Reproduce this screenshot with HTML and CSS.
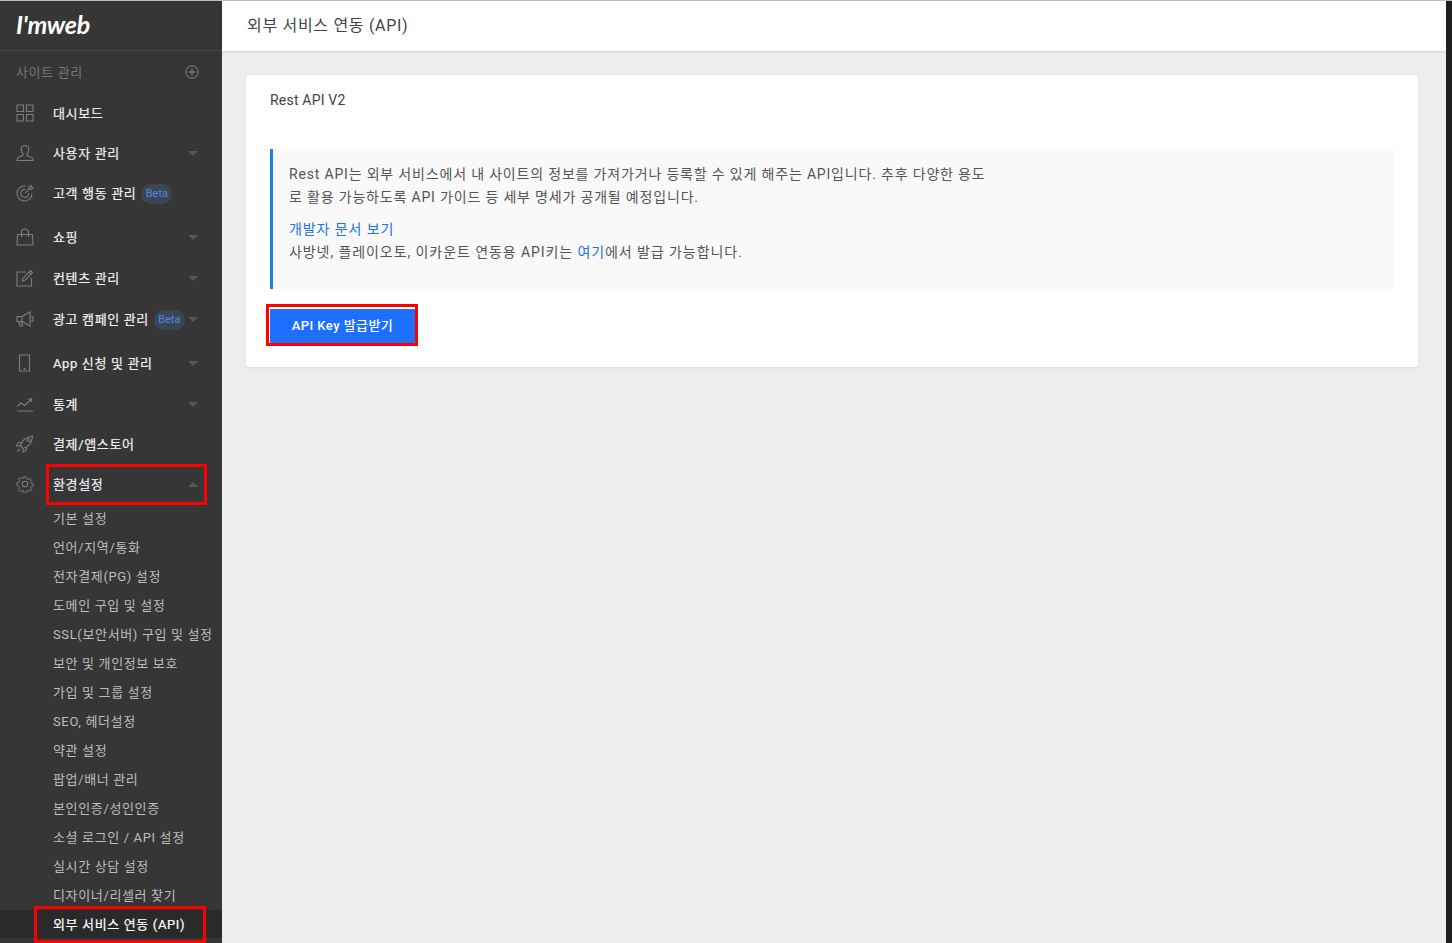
FILE: index.html
```html
<!DOCTYPE html>
<html lang="ko">
<head>
<meta charset="utf-8">
<title>외부 서비스 연동 (API)</title>
<link rel="stylesheet" href="styles.css">
</head>
<body>
<div class="app">
  <aside class="sidebar">
    <div class="logo-bar"><span class="logo">I'mweb</span></div>
    <div class="site-row">
      <span>사이트 관리</span>
      <svg class="plus" viewBox="0 0 14 14"><circle cx="7" cy="7" r="6.2"/><path d="M7 3.500v7M3.500 7h7"/></svg>
    </div>
    <nav class="menu">
      <a class="item">
        <svg class="ico" viewBox="0 0 18 18"><path d="M1 1h6.500v6.500H1zM10.500 1H17v6.500h-6.500zM1 10.500h6.500V17H1zM10.500 10.500H17V17h-6.500z"/></svg>
        <span class="label">대시보드</span>
      </a>
      <a class="item">
        <svg class="ico" viewBox="0 0 18 18"><path d="M9 1.500c-2.400 0-3.800 1.800-3.800 4 0 1.800.8 3.200 1.900 4.200.4.800.1 1.500-.6 1.800l-4 1.700C1.500 13.700 1 14.800 1 16.500h16c0-1.700-.5-2.800-1.500-3l-4-1.700c-.7-.3-1-1-.6-1.800 1.100-1 1.900-2.400 1.900-4.200 0-2.200-1.400-4-3.800-4z"/></svg>
        <span class="label">사용자 관리</span><i class="caret"></i>
      </a>
      <a class="item">
        <svg class="ico" viewBox="0 0 18 18"><path d="M9.500 2.100A7.500 7.500 0 1 0 16 9.500M9.500 5.500A4 4 0 1 0 12.700 9M9 9.200l5-5M13 2.500v2.700h2.800L17 3.500h-1.800V1.600z"/></svg>
        <span class="label">고객 행동 관리</span><span class="beta">Beta</span>
      </a>
      <a class="item gap4">
        <svg class="ico" viewBox="0 0 18 18"><path d="M1.500 6.500h15l.5 10.500H1zM5.500 9V4.500a3.500 3.500 0 0 1 7 0V9"/></svg>
        <span class="label">쇼핑</span><i class="caret"></i>
      </a>
      <a class="item gap1">
        <svg class="ico" viewBox="0 0 18 18"><path d="M15.500 9v8h-14.500V3h9M6.500 12l.7-3L14.500 1.500l2 2L9.300 11zM12.800 3.200l2 2"/></svg>
        <span class="label">컨텐츠 관리</span><i class="caret"></i>
      </a>
      <a class="item gap1">
        <svg class="ico" viewBox="0 0 18 18"><path d="M1 6.500h5v5H1zM6 6.500l8-4.500v14l-8-4.500M14 7h3v4h-3M3 11.500l1 4.500h2.500l-1-4.500"/></svg>
        <span class="label">광고 캠페인 관리</span><span class="beta">Beta</span><i class="caret"></i>
      </a>
      <a class="item gap4">
        <svg class="ico" viewBox="0 0 18 18"><path d="M3.500 1h10v16h-10z"/><path class="dot" d="M8.200 14.300h.8v.8h-.8z"/></svg>
        <span class="label">App 신청 및 관리</span><i class="caret"></i>
      </a>
      <a class="item gap1">
        <svg class="ico" viewBox="0 0 18 18"><path d="M1 16h16M1 11.500l4-3.500 3.500 2.500L15 4.500M12 4h3.500v3"/></svg>
        <span class="label">통계</span><i class="caret"></i>
      </a>
      <a class="item">
        <svg class="ico" viewBox="0 0 18 18"><path d="M6 12.500L4.500 11c1-4 4-9 12-10-.5 8-5.500 11.500-9.500 12.500zM5 7.500H2.500L.5 11l3.500-.2M10.500 12.500V15l-3.500 2 .2-3.500M1.500 16.500l2.500-2.500M11 5a1.500 1.500 0 1 0 3 0 1.500 1.500 0 1 0-3 0"/></svg>
        <span class="label">결제/앱스토어</span>
      </a>
      <a class="item">
        <svg class="ico" viewBox="0 0 18 18"><circle cx="9" cy="9" r="2.800"/><path d="M7.600 1h2.800l.4 2.300 1.500.7 2-1.300 2 2-1.300 2 .7 1.500 2.300.4v2.800l-2.300.4-.7 1.500 1.300 2-2 2-2-1.300-1.500.7-.4 2.300H7.600l-.4-2.300-1.500-.7-2 1.300-2-2 1.300-2-.7-1.500L0 10.400V7.600l2.300-.4.7-1.500-1.300-2 2-2 2 1.300 1.500-.7z" transform="translate(.9 .9) scale(.9)"/></svg>
        <span class="label">환경설정</span><i class="caret caret-up"></i>
      </a>
    </nav>
    <ul class="submenu">
      <li>기본 설정</li>
      <li>언어/지역/통화</li>
      <li>전자결제(PG) 설정</li>
      <li>도메인 구입 및 설정</li>
      <li>SSL(보안서버) 구입 및 설정</li>
      <li>보안 및 개인정보 보호</li>
      <li>가입 및 그룹 설정</li>
      <li>SEO, 헤더설정</li>
      <li>약관 설정</li>
      <li>팝업/배너 관리</li>
      <li>본인인증/성인인증</li>
      <li>소셜 로그인 / API 설정</li>
      <li>실시간 상담 설정</li>
      <li>디자이너/리셀러 찾기</li>
      <li class="active">외부 서비스 연동 (API)</li>
    </ul>
  </aside>
  <main class="main">
    <header class="topbar">외부 서비스 연동 (API)</header>
    <div class="content">
      <section class="card">
        <h2 class="card-title">Rest API V2</h2>
        <div class="notice">
          <p class="notice-main">Rest API는 외부 서비스에서 내 사이트의 정보를 가져가거나 등록할 수 있게 해주는 API입니다. 추후 다양한 용도<br>로 활용 가능하도록 API 가이드 등 세부 명세가 공개될 예정입니다.</p>
          <p class="notice-sub"><a class="link">개발자 문서 보기</a><br>사방넷, 플레이오토, 이카운트 연동용 API키는 <a class="link">여기</a>에서 발급 가능합니다.</p>
        </div>
        <button class="btn" type="button">API Key 발급받기</button>
      </section>
    </div>
  </main>
  <div class="edge"></div>
</div>
<div class="mark mark-settings"></div>
<div class="mark mark-api"></div>
<div class="mark mark-btn"></div>
</body>
</html>
```

FILE: styles.css
```css
* { box-sizing: border-box; }
html, body { margin: 0; height: 100%; overflow: hidden; }
body {
  font-family: Roboto, "Noto Sans CJK KR", sans-serif;
  font-size: 13px;
  color: #444;
  background: #ededed;
}
.app { display: flex; height: 943px; border-top: 1px solid #bdbdbd; }

.sidebar { width: 222px; flex: none; background: #363636; color: #fff; letter-spacing: .64px; }
.logo-bar { height: 50px; border-bottom: 1px solid #474747; padding: 6px 0 0 16px; letter-spacing: 0; }
.logo { font: italic 700 25px/34px Lato, sans-serif; color: #fff; letter-spacing: -.3px; }
.site-row { height: 41px; display: flex; align-items: center; justify-content: space-between; padding-right: 23px; padding-left: 16px; color: #777; }
.plus { width: 14px; height: 14px; fill: none; stroke: #8a8a8a; stroke-width: 1; }

.menu { display: flex; flex-direction: column; margin-bottom: 1px; }
.item { display: flex; align-items: center; height: 40px; padding-left: 16px; position: relative; color: #f0f0f0; font-weight: 400; -webkit-text-stroke: .2px #f0f0f0; }
.gap1 { margin-top: 1px; }
.gap4 { margin-top: 4px; }
.ico { width: 18px; height: 18px; flex: none; margin: 2px 19px 0 0; fill: none; stroke: #7d7d7d; stroke-width: 1.1; }
.dot { fill: #7d7d7d; }
.caret { position: absolute; right: 24px; top: 50%; margin-top: -1px; border: 5px solid transparent; border-top: 5px solid #575757; border-bottom: 0; }
.caret-up { border-top: 0; border-bottom: 5px solid #575757; }
.beta { margin: 4px 0 0 5px; height: 20px; width: 31px; text-align: center; border-radius: 10px; background: #3c4653; color: #4f86e8; font-size: 11px; letter-spacing: 0; line-height: 20px; -webkit-text-stroke: 0; }

.submenu { list-style: none; margin: 0; padding: 0; }
.submenu li { height: 29px; line-height: 29px; padding-left: 53px; color: #bdbdbd; white-space: nowrap; }
.submenu .active { height: 28px; background: #2a2a2a; color: #fff; -webkit-text-stroke: .2px #fff; }

.main { flex: 1; min-width: 0; display: flex; flex-direction: column; }
.topbar { height: 50px; flex: none; background: #fff; padding-left: 25px; font-size: 16px; line-height: 50px; letter-spacing: .7px; color: #444; box-shadow: 0 1px 2px rgba(0,0,0,.12); }
.content { padding: 24px 28px 0 24px; }
.card { height: 292px; background: #fff; border-radius: 3px; padding: 15px 24px 0; box-shadow: 0 1px 2px rgba(0,0,0,.08); }
.card-title { margin: 0; font-size: 14px; font-weight: 400; line-height: 20px; letter-spacing: .2px; color: #444; }
.notice { margin-top: 39px; height: 140px; background: #f9f9f9; border-left: 3px solid #1e7ee4; padding: 14px 16px 0; font-size: 14px; line-height: 23px; letter-spacing: .82px; color: #555; }
.notice p { margin: 0; }
.notice .notice-sub { margin-top: 9px; letter-spacing: .92px; }
.link { color: #1a73f0; }
.btn { display: block; margin-top: 20px; width: 145px; height: 34px; padding: 0 0 3px; border: 0; border-radius: 1px; background: #1d6fff; color: #fff; letter-spacing: .45px; font: 500 13px Roboto, "Noto Sans CJK KR", sans-serif; }
.edge { width: 6px; flex: none; background: #1e1e1e; }

.mark { position: absolute; border: 3px solid #f00; }
.mark-settings { left: 46px; top: 464px; width: 161px; height: 41px; }
.mark-api { left: 34px; top: 906px; width: 172px; height: 37px; }
.mark-btn { left: 266px; top: 304px; width: 152px; height: 42px; }
```
